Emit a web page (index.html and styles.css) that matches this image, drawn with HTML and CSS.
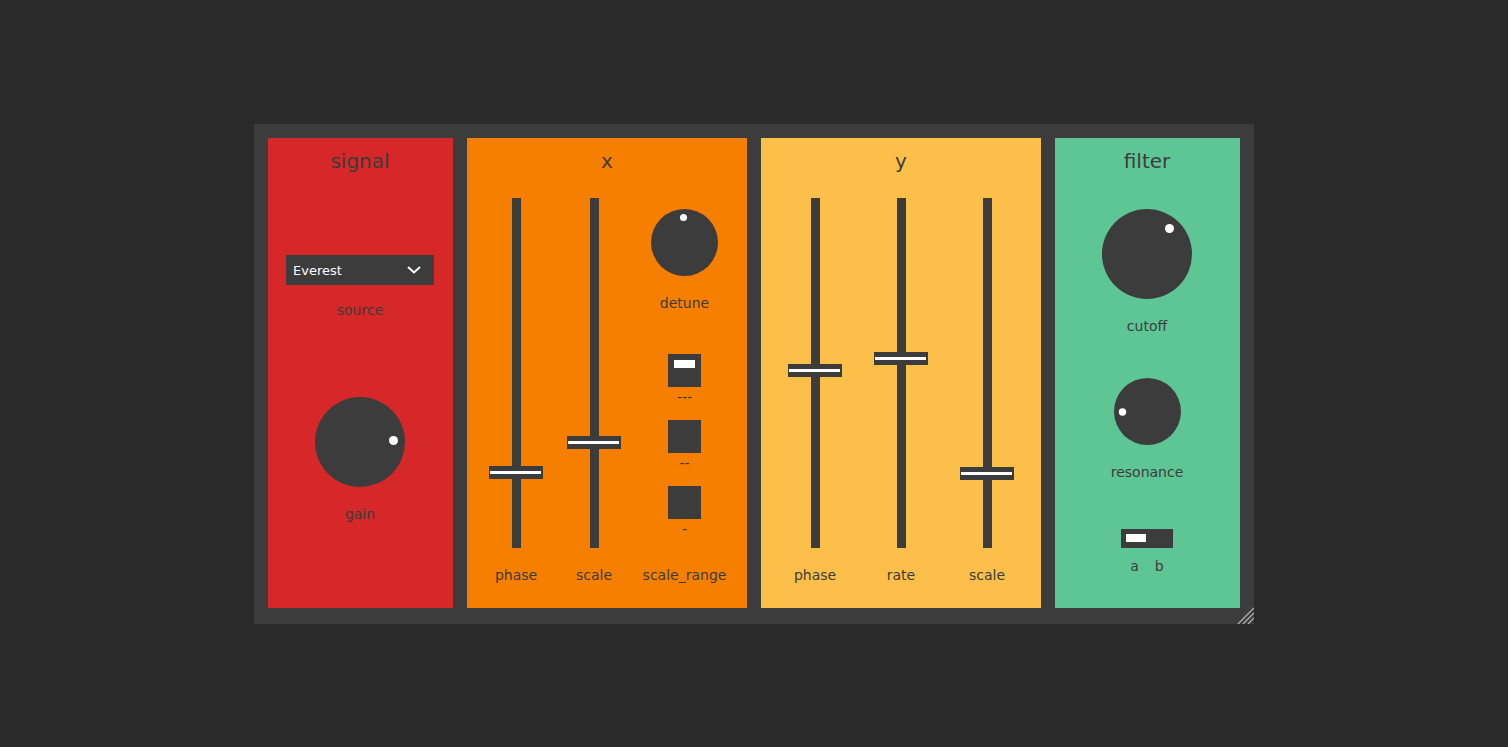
FILE: index.html
```html
<!DOCTYPE html>
<html>
<head>
<meta charset="utf-8">
<link rel="stylesheet" href="styles.css">
</head>
<body>
<div class="app">
  <section class="panel panel-signal">
    <div class="title">signal</div>
    <div class="select">
      <span>Everest</span>
      <svg class="chev" width="14" height="8" viewBox="0 0 14 8"><path d="M1 1 L7 6.5 L13 1" fill="none" stroke="#fff" stroke-width="2"/></svg>
    </div>
    <div class="lbl lbl-source">source</div>
    <svg class="knob knob-gain" width="90" height="90" viewBox="0 0 90 90"><circle cx="45" cy="45" r="45" fill="#3c3c3c"/><circle cx="78.5" cy="43.5" r="4.5" fill="#fff"/></svg>
    <div class="lbl lbl-gain">gain</div>
  </section>

  <section class="panel panel-x">
    <div class="title">x</div>
    <div class="cols cols-x">
      <div class="slider"><div class="track"></div><div class="thumb" style="top:268px"></div></div>
      <div class="slider"><div class="track"></div><div class="thumb" style="top:238px"></div></div>
      <div class="stack">
        <svg class="knob knob-detune" width="67" height="67" viewBox="0 0 67 67"><circle cx="33.5" cy="33.5" r="33.5" fill="#3c3c3c"/><circle cx="32.5" cy="8.5" r="3.5" fill="#fff"/></svg>
        <div class="lbl lbl-detune">detune</div>
        <div class="toggle on"></div>
        <div class="lbl lbl-dash">---</div>
        <div class="toggle t2"></div>
        <div class="lbl lbl-dash">--</div>
        <div class="toggle t2"></div>
        <div class="lbl lbl-dash">-</div>
      </div>
      <div class="lbl lbl-bottom">phase</div>
      <div class="lbl lbl-bottom">scale</div>
      <div class="lbl lbl-bottom">scale_range</div>
    </div>
  </section>

  <section class="panel panel-y">
    <div class="title">y</div>
    <div class="cols cols-y">
      <div class="slider"><div class="track"></div><div class="thumb" style="top:166px"></div></div>
      <div class="slider"><div class="track"></div><div class="thumb" style="top:154px"></div></div>
      <div class="slider"><div class="track"></div><div class="thumb" style="top:269px"></div></div>
      <div class="lbl lbl-bottom">phase</div>
      <div class="lbl lbl-bottom">rate</div>
      <div class="lbl lbl-bottom">scale</div>
    </div>
  </section>

  <section class="panel panel-filter">
    <div class="title">filter</div>
    <svg class="knob knob-cutoff" width="90" height="90" viewBox="0 0 90 90"><circle cx="45" cy="45" r="45" fill="#3c3c3c"/><circle cx="67.5" cy="19.5" r="4.5" fill="#fff"/></svg>
    <div class="lbl lbl-cutoff">cutoff</div>
    <svg class="knob knob-res" width="67" height="67" viewBox="0 0 67 67"><circle cx="33.5" cy="33.5" r="33.5" fill="#3c3c3c"/><circle cx="8.5" cy="34" r="3.7" fill="#fff"/></svg>
    <div class="lbl lbl-res">resonance</div>
    <div class="switch"><div class="switch-dot"></div></div>
    <div class="ab"><span>a</span><span>b</span></div>
  </section>

  <svg class="resize" width="18" height="18" viewBox="0 0 18 18">
    <path d="M18 2 L2 18 M18 7 L7 18 M18 12 L12 18" stroke="#b8b8b8" stroke-width="1.2"/>
  </svg>
</div>
</body>
</html>
```

FILE: styles.css
```css
* { box-sizing: border-box; }
html, body { margin: 0; padding: 0; }
body {
  background: #2a2a2a;
  font-family: "DejaVu Sans", Verdana, sans-serif;
  color: #3c3c3c;
  height: 747px;
  overflow: hidden;
}
.app {
  position: relative;
  width: 1000px;
  height: 500px;
  margin: 124px auto 0;
  background: #3c3c3c;
  padding: 14px;
  display: flex;
  gap: 14px;
}
.panel {
  height: 470px;
  display: flex;
  flex-direction: column;
  align-items: center;
  padding-top: 11px;
}
.panel-signal { width: 185px; background: #d62828; padding-right: 1px; }
.panel-x { width: 280px; background: #f77f00; }
.panel-y { width: 280px; background: #fcbf49; }
.panel-filter { width: 185px; background: #5ec695; padding-right: 1px; }

.title {
  font-size: 20px;
  line-height: 24px;
  height: 24px;
}
.lbl {
  font-size: 14px;
  line-height: 18px;
  height: 18px;
  text-align: center;
  white-space: nowrap;
}

.select {
  margin-top: 82px;
  width: 148px;
  height: 30px;
  background: #3c3c3c;
  color: #fff;
  font-size: 13px;
  display: flex;
  align-items: center;
  justify-content: space-between;
  padding: 0 13px 0 7px;
}
.chev { display: block; margin-top: -1px; }
.lbl-source { margin-top: 16px; }
.knob { display: block; }
.knob-gain { margin-top: 78px; }
.lbl-gain { margin-top: 18px; }

.cols {
  align-self: flex-start;
  display: grid;
  grid-template-rows: 350px auto;
  justify-items: center;
  margin-top: 25px;
}
.cols-x { grid-template-columns: 72px 84px 97px; padding-left: 13px; }
.cols-y { grid-template-columns: 86px 86px 86px; padding-left: 11px; }

.slider {
  position: relative;
  width: 54px;
  height: 350px;
  display: flex;
  justify-content: center;
}
.track { width: 9px; height: 100%; background: #3c3c3c; }
.thumb {
  position: absolute;
  left: 0;
  width: 54px;
  height: 13px;
  background: #3c3c3c;
}
.thumb::after {
  content: "";
  position: absolute;
  left: 1px;
  top: 5px;
  width: 51px;
  height: 3px;
  background: #fff;
}
.lbl-bottom { margin-top: 18px; }

.stack {
  display: flex;
  flex-direction: column;
  align-items: center;
}
.knob-detune { margin-top: 11px; }
.lbl-detune { margin-top: 18px; }
.toggle {
  position: relative;
  width: 33px;
  height: 33px;
  background: #3c3c3c;
  margin-top: 42px;
}
.lbl-dash { margin-top: 1px; }
.toggle.t2 { margin-top: 14px; }
.toggle.on::after {
  content: "";
  position: absolute;
  left: 6px;
  top: 6px;
  width: 21px;
  height: 8px;
  background: #fff;
}

.knob-cutoff { margin-top: 36px; }
.lbl-cutoff { margin-top: 18px; }
.knob-res { margin-top: 43px; }
.lbl-res { margin-top: 18px; }
.switch {
  margin-top: 48px;
  width: 52px;
  height: 19px;
  background: #3c3c3c;
  padding: 5px;
}
.switch-dot { width: 20px; height: 8px; background: #fff; }
.ab {
  margin-top: 9px;
  font-size: 14px;
  line-height: 18px;
  display: flex;
  gap: 16px;
}
.resize { position: absolute; right: 0; bottom: 0; display: block; }
```
